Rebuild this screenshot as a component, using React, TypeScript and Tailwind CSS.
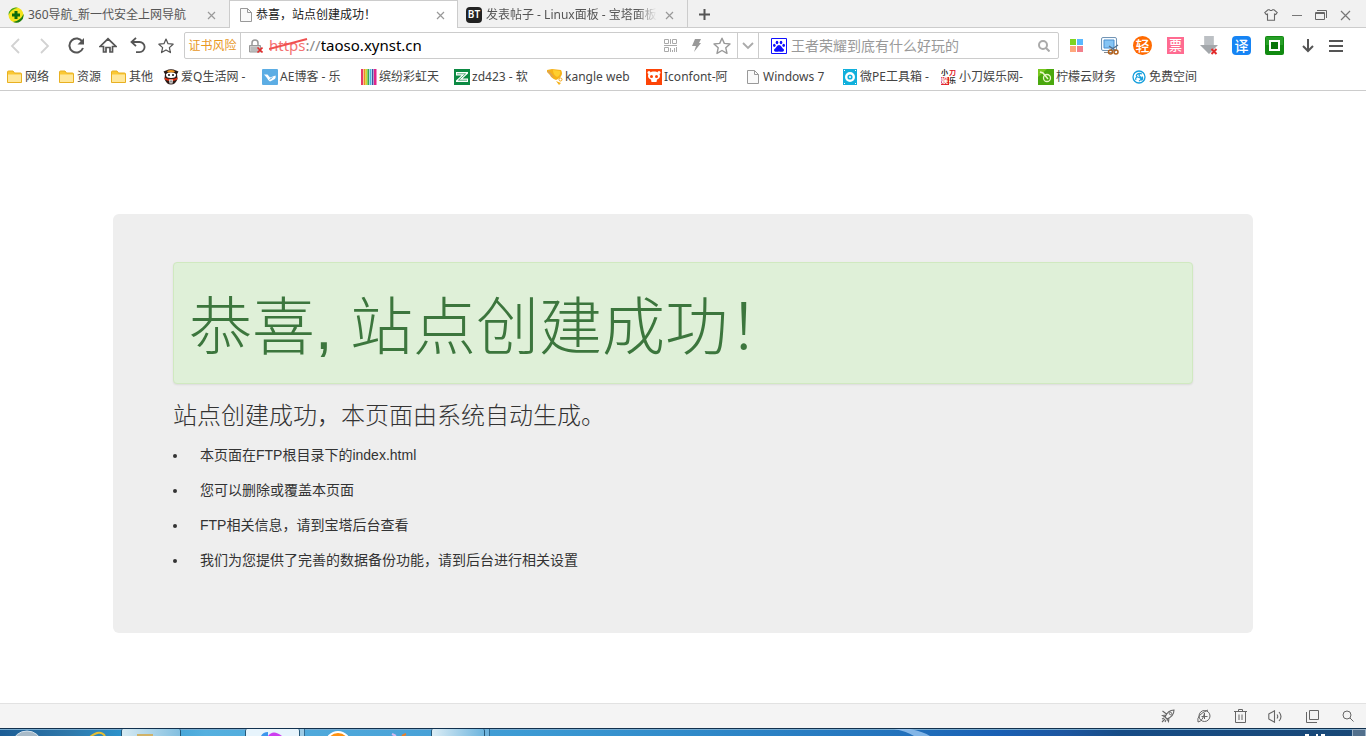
import type { ReactNode } from 'react'

const UI_FONT = "font-['Noto_Sans','Noto_Sans_CJK_SC',sans-serif]"
const PAGE_FONT = "font-['Liberation_Sans','Noto_Sans_CJK_SC',sans-serif]"

/* ---------- Icons ---------- */

function Svg({ w, h, children, className = '' }: { w: number; h: number; children: ReactNode; className?: string }) {
	return (
		<svg width={w} height={h} viewBox={`0 0 ${w} ${h}`} fill="none" className={`shrink-0 ${className}`} aria-hidden="true">
			{children}
		</svg>
	)
}

const FileIcon = () => (
	<Svg w={12} h={14}>
		<path d="M1 .5h6.5l4 4v9H.5V.5z" fill="#fafafa" stroke="#999" />
		<path d="M7.5.5v4h4" stroke="#999" />
	</Svg>
)

const FolderIcon = () => (
	<Svg w={15} h={14}>
		<path d="M.5 12.5V2Q.5 1 1.5 1H6l1.500 2H13.500q1 0 1 1v8.500z" fill="#fbc934" stroke="#e8b021" />
		<path d="M1 4.500h13v7.500H1z" fill="#ffe79a" />
	</Svg>
)

const Nav360Icon = () => (
	<Svg w={16} h={16}>
		<circle cx="8" cy="8" r="7.500" fill="#f4e31c" />
		<path d="M.5 8A7.500 7.500 0 0 1 10 .800Q3 2 .5 8z" fill="#3aa526" />
		<path d="M15.500 7A7.500 7.500 0 0 1 5 15Q13 13.500 15.500 7z" fill="#1c7d12" />
		<path d="M6.500 4h3v2.500H12v3H9.500V12h-3V9.500H4v-3h2.500z" fill="#0c6b0c" />
	</Svg>
)

const CrossIcon = () => (
	<Svg w={9} h={9}>
		<path d="M1 1l7 7M8 1L1 8" stroke="#999" strokeWidth="1.200" />
	</Svg>
)

const StarIcon = ({ size, color }: { size: number; color: string }) => (
	<svg width={size} height={size} viewBox="0 0 18 18" fill="none" aria-hidden="true">
		<path d="M9 1.200l2.300 5.200 5.700.6-4.200 3.800 1.200 5.600L9 13.500l-5 2.900 1.200-5.600L1 7l5.700-.6z" stroke={color} strokeWidth="1.400" strokeLinejoin="round" />
	</svg>
)

const SearchIcon = ({ color, width }: { color: string; width: number }) => (
	<Svg w={12} h={12}>
		<circle cx="5" cy="5" r="4" stroke={color} strokeWidth={width} />
		<path d="M8 8l3.500 3.500" stroke={color} strokeWidth={width} />
	</Svg>
)

const PawIcon = () => (
	<Svg w={16} h={16}>
		<path d="M.5.5h15v15H.5z" fill="#fff" stroke="#1010ff" />
		<ellipse cx="6" cy="4.500" rx="1.300" ry="1.800" fill="#1010ff" />
		<ellipse cx="10" cy="4.500" rx="1.300" ry="1.800" fill="#1010ff" />
		<ellipse cx="3.300" cy="7.300" rx="1.300" ry="1.600" fill="#1010ff" />
		<ellipse cx="12.700" cy="7.300" rx="1.300" ry="1.600" fill="#1010ff" />
		<path d="M8 7q1.500 0 2.500 1.700t2.300 2.500q.7 2.300-1.600 2.600-1.600.2-3.200-.3-1.600.5-3.200.3-2.300-.3-1.600-2.600 1.300-.8 2.300-2.500T8 7z" fill="#1010ff" />
	</Svg>
)

const PandaIcon = () => (
	<Svg w={16} h={16}>
		<path d="M.5 2.500L3 1.500q5-2.500 10 0l2.500 1L14 5l.5 5q-2 5.500-6.500 5.500T1.500 10L2 5z" fill="#2a1a16" />
		<path d="M4 2q4-2 8 0l-1 1.500H5z" fill="#f0961e" />
		<path d="M3 5.500Q3.500 3.500 8 3.500t5 2q.5 3.500-5 3.500t-5-3.500z" fill="#fff" />
		<circle cx="6" cy="6" r="1" fill="#111" />
		<circle cx="10" cy="6" r="1" fill="#111" />
		<path d="M1.500 8.500q6.500 3 13 0l-.5 2.300q-6 2.700-12 0z" fill="#dc2c10" />
		<path d="M6 10.500h4l-.5 4h-3z" fill="#e8e8e8" />
		<path d="M7.500 11.500h1v2h-1z" fill="#444" />
	</Svg>
)

const BirdIcon = () => (
	<Svg w={16} h={16}>
		<rect width="16" height="16" rx="1" fill="#5cade4" />
		<path d="M2 5.500h3.500L8 8.500l5.500-2q1 3-2.500 4.500l-3 1.500q-2-1-3-3.500z" fill="#fff" />
		<path d="M7.500 10.500l3-2" stroke="#5cade4" />
	</Svg>
)

const RainbowIcon = () => (
	<Svg w={16} h={16}>
		<path d="M0 0h2v16H0z" fill="#e53968" />
		<path d="M2.500 0h2v16h-2z" fill="#f08a24" />
		<path d="M4.500 0h2v16h-2z" fill="#c9dc2d" />
		<path d="M6.500 0h1.500v16H6.500z" fill="#3aa757" />
		<path d="M8.500 0h2v16h-2z" fill="#4bb8de" />
		<path d="M11 0h1.500v16H11z" fill="#4d4a9e" />
		<path d="M13 0h2.500v16H13z" fill="#e0258b" />
	</Svg>
)

const ZdIcon = () => (
	<Svg w={16} h={16}>
		<path d="M0 0h16v16H0z" fill="#0c8a43" />
		<path d="M2 3h12v1.500L8.500 9.500H14V13H2v-1.500L7.500 6.500H2z" fill="#fff" />
		<path d="M3 4.800h8.500L4.500 11.200H13" stroke="#0c8a43" strokeWidth=".7" />
	</Svg>
)

const KangleIcon = () => (
	<Svg w={16} h={16}>
		<path d="M0 1l5-1 9 1q3 5-3 9l-2 1Q4 9 3 6L0 3z" fill="#f6b21a" />
		<path d="M1 2l5 6" stroke="#d9a25f" strokeWidth="1.500" />
		<path d="M6 1l7 1q1 4-3 6Q6 6 6 1z" fill="#ffcf2e" />
		<circle cx="13.500" cy="10.500" r="1.500" stroke="#f2a516" />
		<path d="M9 12l5 2-2 2z" fill="#f6b21a" />
	</Svg>
)

const IconfontIcon = () => (
	<Svg w={16} h={16}>
		<path d="M0 0h16v16H0z" fill="#fd4407" />
		<path d="M8 2.500c3.500 0 6 2 6 4.500 0 2-1.500 3-3 3.500L10.500 13h-5L5 10.500C3.500 10 2 9 2 7c0-2.500 2.500-4.500 6-4.500z" fill="#fff" />
		<circle cx="3" cy="3.500" r="1.500" fill="#fff" />
		<circle cx="13" cy="3.500" r="1.500" fill="#fff" />
		<circle cx="5.500" cy="7.500" r="1.500" fill="#fd4407" />
		<circle cx="10.500" cy="7.500" r="1.500" fill="#fd4407" />
	</Svg>
)

const PeIcon = () => (
	<Svg w={14} h={16}>
		<path d="M0 0h14v16H0z" fill="#11b0dc" />
		<circle cx="7" cy="8" r="3.800" stroke="#fff" strokeWidth="2.400" />
		<circle cx="7" cy="8" r="1" fill="#fff" />
		<path d="M1 1h1v1H1zM12 1h1v1h-1zM1 14h1v1H1zM12 14h1v1h-1z" fill="#fff" />
	</Svg>
)

const XiaodaoIcon = () => (
	<span className="grid size-4 shrink-0 grid-cols-2 text-[7px] font-bold leading-[8px]">
		<span className="h-2 overflow-hidden text-[#222]">小</span>
		<span className="h-2 overflow-hidden text-[#e0202a]">刀</span>
		<span className="h-2 overflow-hidden bg-[#e0202a] text-white">娱</span>
		<span className="h-2 overflow-hidden text-[#222]">乐</span>
	</span>
)

const LemonIcon = () => (
	<Svg w={16} h={16}>
		<path d="M0 0h16v16H0z" fill="#4aa80e" />
		<path d="M0 0h9L0 8z" fill="#78c71f" />
		<circle cx="9" cy="9" r="3.500" stroke="#e8f7c8" strokeWidth="1.300" />
		<path d="M2 3l3 1 5 6" stroke="#e8f7c8" strokeWidth="1.500" />
	</Svg>
)

const SpaceIcon = () => (
	<Svg w={14} h={14}>
		<circle cx="7" cy="7" r="6" stroke="#159fdd" strokeWidth="1.300" />
		<path d="M10 4Q7 2.500 5 4.500T7 7.500t0 3.500M4 10Q3 8 5 7M8 3.500q-2 1.500 0 3T9 10M10 6.500q1.500 2-.5 4" stroke="#159fdd" strokeWidth="1.200" />
	</Svg>
)

/* ---------- Tab strip ---------- */

const tabs = [
	{ title: '360导航_新一代安全上网导航', icon: <Nav360Icon />, active: false },
	{ title: '恭喜，站点创建成功！', icon: <FileIcon />, active: true },
	{
		title: '发表帖子 - Linux面板 - 宝塔面板',
		icon: (
			<span className="flex size-4 shrink-0 items-center justify-center rounded-sm bg-[#222] text-[10px] font-semibold text-white">
				BT
			</span>
		),
		active: false,
	},
]

function TabStrip() {
	return (
		<header className="flex h-7 bg-[#f1f1f1] text-[12px] text-[#555] shadow-[inset_0_-1px_0_#ccc]">
			<div role="tablist" className="flex">
				{tabs.map((tab) => (
					<div
						key={tab.title}
						className={
							tab.active
								? 'flex w-[229px] items-center border-x border-t border-[#ccc] bg-white pl-[10px] pr-3 text-[#222]'
								: 'flex w-[229px] items-center pl-2 pr-[13px] pt-px'
						}
					>
						<button type="button" role="tab" aria-selected={tab.active} className="flex min-w-0 flex-1 items-center gap-1 text-left">
							{tab.icon}
							<span
								className={
									tab.title.length > 18
										? 'overflow-hidden whitespace-nowrap [mask-image:linear-gradient(to_right,#000_88%,transparent)]'
										: 'whitespace-nowrap'
								}
							>
								{tab.title}
							</span>
						</button>
						<button type="button" aria-label="关闭标签" className="pl-2 pt-[2px]">
							<CrossIcon />
						</button>
					</div>
				))}
			</div>
			<button type="button" aria-label="新标签" className="flex w-[34px] items-center justify-center border-l border-[#ccc]">
				<Svg w={11} h={11}>
					<path d="M5.500 0v11M0 5.500h11" stroke="#555" strokeWidth="2" />
				</Svg>
			</button>
			<div className="ml-auto flex items-center pr-[9px] pt-[2px]">
				<button type="button" aria-label="皮肤" className="flex w-7 justify-center">
					<Svg w={14} h={12}>
						<path d="M4 .8h1.500q1.500 1.400 3 0H10l3.200 2.700-1.500 2-1.200-.5v6.200h-7V5l-1.200.5-1.500-2z" stroke="#666" strokeWidth="1.100" />
					</Svg>
				</button>
				<button type="button" aria-label="最小化" className="flex w-6 justify-center">
					<Svg w={10} h={12}>
						<path d="M0 6.500h10" stroke="#777" />
					</Svg>
				</button>
				<button type="button" aria-label="还原" className="flex w-6 justify-center">
					<Svg w={12} h={12}>
						<path d="M.5 3.500h9v7h-9zM2 1.500h9.500V9" stroke="#666" />
						<path d="M1 4.500h8" stroke="#666" />
					</Svg>
				</button>
				<button type="button" aria-label="关闭" className="flex w-6 justify-center">
					<Svg w={11} h={11}>
						<path d="M1 1l9 9M10 1l-9 9" stroke="#777" strokeWidth="1.200" />
					</Svg>
				</button>
			</div>
		</header>
	)
}

/* ---------- Toolbar ---------- */

const navButtons = [
	{
		label: '后退',
		cell: 'w-[30px]',
		icon: (
			<Svg w={10} h={16}>
				<path d="M9 1L2 8l7 7" stroke="#d2d2d2" strokeWidth="1.800" />
			</Svg>
		),
	},
	{
		label: '前进',
		cell: 'w-[30px]',
		icon: (
			<Svg w={10} h={16}>
				<path d="M1 1l7 7-7 7" stroke="#d2d2d2" strokeWidth="1.800" />
			</Svg>
		),
	},
	{
		label: '刷新',
		cell: 'w-8',
		icon: (
			<Svg w={17} h={17}>
				<path d="M14.500 5A7 7 0 1 0 15 11" stroke="#555" strokeWidth="2" />
				<path d="M16 1v6.500H9.500z" fill="#555" />
			</Svg>
		),
	},
	{
		label: '主页',
		cell: 'w-8',
		icon: (
			<Svg w={18} h={17}>
				<path d="M1 9.500L9 1.800l8 7.700h-3.500V15H11v-4.500H7V15H4.500V9.500z" stroke="#555" strokeWidth="1.700" />
			</Svg>
		),
	},
	{
		label: '恢复',
		cell: 'w-7',
		icon: (
			<Svg w={16} h={17}>
				<path d="M2 5h7.500a5 5 0 0 1 0 10.200H6" stroke="#555" strokeWidth="1.800" />
				<path d="M6 .8L1.500 5 6 9.200" stroke="#555" strokeWidth="1.800" />
			</Svg>
		),
	},
	{ label: '收藏', cell: 'w-7', icon: <StarIcon size={16} color="#555" /> },
]

const extensions = [
	{
		label: '扩展',
		icon: (
			<Svg w={13} h={13}>
				<path d="M0 0h6v6H0z" fill="#7ed321" />
				<path d="M7 0h6v6H7z" fill="#5ab8ff" />
				<path d="M0 7h6v6H0z" fill="#ffa77c" />
				<path d="M7 7h6v6H7z" fill="#f27f8c" />
			</Svg>
		),
	},
	{
		label: '截图',
		icon: (
			<Svg w={18} h={18}>
				<rect x=".5" y=".5" width="15" height="13" rx="1.500" fill="#f6fbff" stroke="#7395b5" />
				<path d="M3 3h10v8H3z" fill="#84c4f5" stroke="#4a90d0" />
				<path d="M3 15.500h8" stroke="#888" />
				<path d="M17 8l-7 5M8 9l7 5" stroke="#56718c" strokeWidth="1.300" />
				<circle cx="9.500" cy="15" r="2" stroke="#b3601a" strokeWidth="1.500" />
				<circle cx="15" cy="15" r="2" stroke="#b3601a" strokeWidth="1.500" />
			</Svg>
		),
	},
	{
		label: '轻',
		icon: <span className="flex size-[19px] items-center justify-center rounded-full bg-[#ff6a00] text-[14px] font-medium leading-none text-white">轻</span>,
	},
	{
		label: '抢票',
		icon: <span className="flex size-[17px] items-center justify-center bg-[#ff6b91] text-[13px] font-medium leading-none text-white">票</span>,
	},
	{
		label: '下载插件',
		icon: (
			<Svg w={18} h={19}>
				<path d="M4.500 0h9v9H18l-9 9-9-9h4.500z" fill="#a3a7ab" />
				<path d="M4.500 0h9v9h-9z" fill="#bcc0c4" />
				<path d="M11.500 13l5 5M16.500 13l-5 5" stroke="#e22b2b" strokeWidth="2" />
			</Svg>
		),
	},
	{
		label: '翻译',
		icon: <span className="flex size-[19px] items-center justify-center rounded bg-[#1684f4] text-[14px] font-medium leading-none text-white">译</span>,
	},
	{
		label: '应用',
		icon: (
			<Svg w={19} h={19}>
				<rect width="19" height="19" rx="2" fill="#118a11" />
				<path d="M1 1h17v8H1z" fill="#3db43d" opacity=".5" />
				<path d="M4 4h11v11H4z" fill="#fff" />
				<path d="M6 6h7v7H6z" fill="#0a750a" />
			</Svg>
		),
	},
	{
		label: '下载',
		icon: (
			<Svg w={12} h={14}>
				<path d="M6 0v12M1 7l5 5 5-5" stroke="#555" strokeWidth="2" />
			</Svg>
		),
	},
]

function AddressBar() {
	return (
		<div className="ml-1 flex h-[27px] min-w-0 flex-1 items-stretch rounded-xs border border-[#ccc] bg-white">
			<button type="button" className="w-14 shrink-0 border-r border-[#ccc] text-[12px] text-[#e8981f]">
				证书风险
			</button>
			<div className="flex min-w-0 flex-1 items-center pl-2">
				<Svg w={14} h={14}>
					<path d="M3 7V4a3 3 0 0 1 6 0v3" stroke="#999" strokeWidth="1.500" />
					<path d="M.5 6.500h11v6.500H.5z" fill="#ccc" stroke="#999" />
					<path d="M2 9h8M2 11h8" stroke="#aaa" />
					<path d="M8.500 8.500l5 5M13.500 8.500l-5 5" stroke="#e22b2b" strokeWidth="1.600" />
				</Svg>
				<label htmlFor="address" className="relative ml-[6px] text-[15px] text-[#888]">
					<span className="text-[#f47272]">https</span>://
					<svg viewBox="0 0 40 13" className="absolute left-0 top-1 h-[13px] w-10" fill="none" aria-hidden="true">
						<path d="M0 11L38 1" stroke="#f05050" strokeWidth="2" />
					</svg>
				</label>
				<input id="address" defaultValue="taoso.xynst.cn" className="min-w-0 flex-1 text-[15px] text-black outline-none" />
				<button type="button" aria-label="二维码">
					<Svg w={13} h={13}>
						<path d="M.5.5h4v4h-4zM8.500.5h4v4h-4zM.5 8.500h4v4h-4zM6.500 0v5M0 6.500h13M6.500 9v4M8.500 11v2M10.500 9v4M12.500 8v5" stroke="#aaa" />
					</Svg>
				</button>
				<button type="button" aria-label="极速模式" className="flex w-9 justify-center pl-1">
					<Svg w={10} h={13}>
						<path d="M3 0h6L7 4h2L2 13l2-6H0z" fill="#999" />
					</Svg>
				</button>
				<button type="button" aria-label="收藏此页" className="mr-[6px]">
					<StarIcon size={18} color="#999" />
				</button>
			</div>
			<button type="button" aria-label="展开" className="flex w-[22px] items-center justify-center border-x border-[#ccc]">
				<Svg w={12} h={8}>
					<path d="M1 1l5 5 5-5" stroke="#aaa" strokeWidth="1.800" />
				</Svg>
			</button>
			<div className="flex w-[299px] items-center gap-1 pl-3 pr-2">
				<PawIcon />
				<input aria-label="搜索" placeholder="王者荣耀到底有什么好玩的" className="min-w-0 flex-1 text-[14px] outline-none placeholder:text-[#999]" />
				<button type="button" aria-label="搜索按钮">
					<SearchIcon color="#aaa" width={2} />
				</button>
			</div>
		</div>
	)
}

function Toolbar() {
	return (
		<div className="flex h-[35px] items-center">
			{navButtons.map((btn) => (
				<button key={btn.label} type="button" aria-label={btn.label} className={`flex shrink-0 justify-center ${btn.cell}`}>
					{btn.icon}
				</button>
			))}
			<AddressBar />
			<div className="flex items-center pl-px pr-[18px]">
				{extensions.map((ext) => (
					<button key={ext.label} type="button" aria-label={ext.label} className="flex w-[33px] justify-center">
						{ext.icon}
					</button>
				))}
				<button type="button" aria-label="菜单" className="flex w-6 justify-center">
					<Svg w={14} h={12}>
						<path d="M0 1h14M0 6h14M0 11h14" stroke="#555" strokeWidth="2" />
					</Svg>
				</button>
			</div>
		</div>
	)
}

/* ---------- Bookmarks ---------- */

const folders = ['网络', '资源', '其他']

const bookmarks = [
	{ title: '爱Q生活网 -', icon: <PandaIcon />, width: 'w-[66px]' },
	{ title: 'AE博客 - 乐', icon: <BirdIcon />, width: 'w-[66px]' },
	{ title: '缤纷彩虹天', icon: <RainbowIcon />, width: 'w-[60px]' },
	{ title: 'zd423 - 软', icon: <ZdIcon />, width: 'w-[60px]' },
	{ title: 'kangle web', icon: <KangleIcon />, width: 'w-[66px]' },
	{ title: 'Iconfont-阿', icon: <IconfontIcon />, width: 'w-[66px]' },
	{ title: 'Windows 7', icon: <FileIcon />, width: 'w-[64px]' },
	{ title: '微PE工具箱 -', icon: <PeIcon />, width: 'w-[66px]' },
	{ title: '小刀娱乐网-', icon: <XiaodaoIcon />, width: 'w-[64px]' },
	{ title: '柠檬云财务', icon: <LemonIcon />, width: 'w-[60px]' },
	{ title: '免费空间', icon: <SpaceIcon />, width: 'w-[60px]' },
]

function BookmarkBar() {
	return (
		<nav className="flex h-7 items-center gap-[10px] whitespace-nowrap border-b border-[#ccc] pl-[7px] text-[12px] text-[#444]">
			{folders.map((name) => (
				<button key={name} type="button" className="flex items-center gap-[3px]">
					<FolderIcon />
					{name}
				</button>
			))}
			<div className="flex gap-[15px]">
				{bookmarks.map((item) => (
					<a key={item.title} href="#" className="flex items-center gap-[2px]">
						<span className="flex w-4 justify-center">{item.icon}</span>
						<span className={item.width}>{item.title}</span>
					</a>
				))}
			</div>
		</nav>
	)
}

/* ---------- Page ---------- */

const notes = [
	'本页面在FTP根目录下的index.html',
	'您可以删除或覆盖本页面',
	'FTP相关信息，请到宝塔后台查看',
	'我们为您提供了完善的数据备份功能，请到后台进行相关设置',
]

function SitePage() {
	return (
		<main className={`flex-1 pb-[70px] pt-[123px] ${PAGE_FONT}`}>
			<section className="mx-auto max-w-[1140px] rounded-md bg-[#eee] px-[60px] pb-[55px] pt-12 text-[#333]">
				<div className="rounded border border-[#d0e9c0] bg-[#dff0d8] px-[15px] pb-6 pt-8 shadow-[0_1px_2px_rgba(0,0,0,0.08)]">
					<h1 className="text-[63px] font-light leading-[64px] text-[#3c763d]">恭喜, 站点创建成功！</h1>
				</div>
				<h2 className="mt-[19px] text-[24px] font-light leading-[26px]">站点创建成功，本页面由系统自动生成。</h2>
				<ul className="mt-[9px] text-[14px] leading-[35px]">
					{notes.map((note) => (
						<li key={note} className="flex items-center gap-[23px]">
							<span className="size-1 rounded-full bg-[#333]" />
							{note}
						</li>
					))}
				</ul>
			</section>
		</main>
	)
}

/* ---------- Status bar and taskbar ---------- */

const statusButtons = [
	{
		label: '加速器',
		icon: (
			<Svg w={14} h={14}>
				<path d="M4 8Q7 1 13 1q0 6-7 9zM5 6L1.500 6.500 4 8M8 9l-.5 3.500L6 10M4 10l-3 3M1 10l2-1M4 13l1-2M1.500 2l4 3" stroke="#666" strokeWidth="1.100" />
				<circle cx="9.500" cy="4.500" r="1.200" stroke="#666" />
			</Svg>
		),
	},
	{
		label: '浏览医生',
		icon: (
			<Svg w={14} h={14}>
				<circle cx="7.500" cy="7" r="5.500" stroke="#666" />
				<path d="M1 13Q-1 6 11 1M1 13q5-1 6.500-9v6M4.500 7.500h6" stroke="#666" />
			</Svg>
		),
	},
	{
		label: '清除痕迹',
		icon: (
			<Svg w={13} h={14}>
				<path d="M0 2.500h13M4.500 2V.5h4V2M1.500 3v10.500h10V3M5 5.500V11M8 5.500V11" stroke="#666" />
			</Svg>
		),
	},
	{
		label: '静音',
		icon: (
			<Svg w={16} h={13}>
				<path d="M.8 4L6.500.8v11.400L.8 9zM9 4.500q1.500 2 0 4M11 2q4 4.500 0 9" stroke="#666" strokeWidth="1.100" />
			</Svg>
		),
	},
	{
		label: '分屏',
		icon: (
			<Svg w={13} h={13}>
				<path d="M3.500.5h9v9h-9zM.5 2v10.500H11" stroke="#666" />
			</Svg>
		),
	},
	{ label: '缩放', icon: <SearchIcon color="#666" width={1} /> },
]

function StatusBar() {
	return (
		<footer className="flex h-[25px] items-center justify-end border-t border-[#e2e2e2] bg-[#f4f4f4]">
			{statusButtons.map((btn) => (
				<button key={btn.label} type="button" aria-label={btn.label} className="flex w-9 justify-center">
					{btn.icon}
				</button>
			))}
		</footer>
	)
}

function Taskbar() {
	return (
		<div className="flex h-2 overflow-hidden border-t border-[#12304d] bg-[linear-gradient(to_right,#1c5d95_0%,#2f78aa_5%,#2c93cc_9%,#55b0df_15%,#4aa3d8_30%,#3d9bd4_38%,#2f88c8_52%,#2474bd_65%,#1a60b4_73%,#1d56a0_78%,#174c86_82%,#194876_100%)] pl-3 shadow-[inset_0_1px_0_#79acd0]">
			<Svg w={30} h={7}>
				<ellipse cx="15" cy="14" rx="14" ry="12" fill="#a8bac8" stroke="#d3e2ed" />
			</Svg>
			<Svg w={20} h={7} className="ml-[46px]">
				<path d="M2 8Q12 0 17 7" stroke="#e5bd35" strokeWidth="2" />
			</Svg>
			<div className="ml-[13px] w-[60px] rounded-t-xs border-x border-[#255878] bg-[linear-gradient(to_right,#d6eaf2,#83bfe0)] pl-[15px] pt-[5px]">
				<div className="h-[2px] w-4 bg-[#d0b268]" />
			</div>
			<div className="ml-16 flex w-[55px] justify-center rounded-t-xs border-x border-[#255878] bg-[#e7f4fc]">
				<Svg w={24} h={7}>
					<path d="M0 7q2-4 7-4v4z" fill="#3c96ec" />
					<path d="M7 7q5-7 14 0z" fill="#cd3ef0" />
				</Svg>
			</div>
			<div className="w-[5px] border-r border-[#316c93] bg-[#9ecbe5]" />
			<Svg w={26} h={7} className="ml-5">
				<circle cx="13" cy="15" r="12" fill="#ff9212" stroke="#fff" strokeWidth="2" />
			</Svg>
			<Svg w={16} h={7} className="ml-10">
				<path d="M1 5l4 2" stroke="#d8b9ee" strokeWidth="2" />
				<path d="M15 5l-4 2" stroke="#ee7e26" strokeWidth="2" />
			</Svg>
			<div className="ml-6 w-[54px] rounded-t-xs border-x border-[#255878] bg-[linear-gradient(to_right,#dcedf5,#6eb5de)]" />
			<div className="w-[5px] border-r border-[#316c93] bg-[#6fb3dc]" />
			{/* light streak of the glass */}
			<Svg w={60} h={7} className="ml-[400px]">
				<path d="M4 0h16q14 3 20 7H24Q16 2 4 0z" fill="#9cc8f2" opacity=".8" />
			</Svg>
			<Svg w={24} h={7} className="ml-auto mr-[25px]">
				<path d="M2 6h4M13 6h2M18 6h4" stroke="#fff" strokeWidth="2" />
			</Svg>
			<button type="button" aria-label="显示桌面" className="w-[14px] border border-b-0 border-[#9bb3c8] bg-[#52708d]" />
		</div>
	)
}

export default function App() {
	return (
		<div className={`flex min-h-screen flex-col overflow-hidden bg-white ${UI_FONT}`}>
			<TabStrip />
			<Toolbar />
			<BookmarkBar />
			<SitePage />
			<StatusBar />
			<Taskbar />
		</div>
	)
}
